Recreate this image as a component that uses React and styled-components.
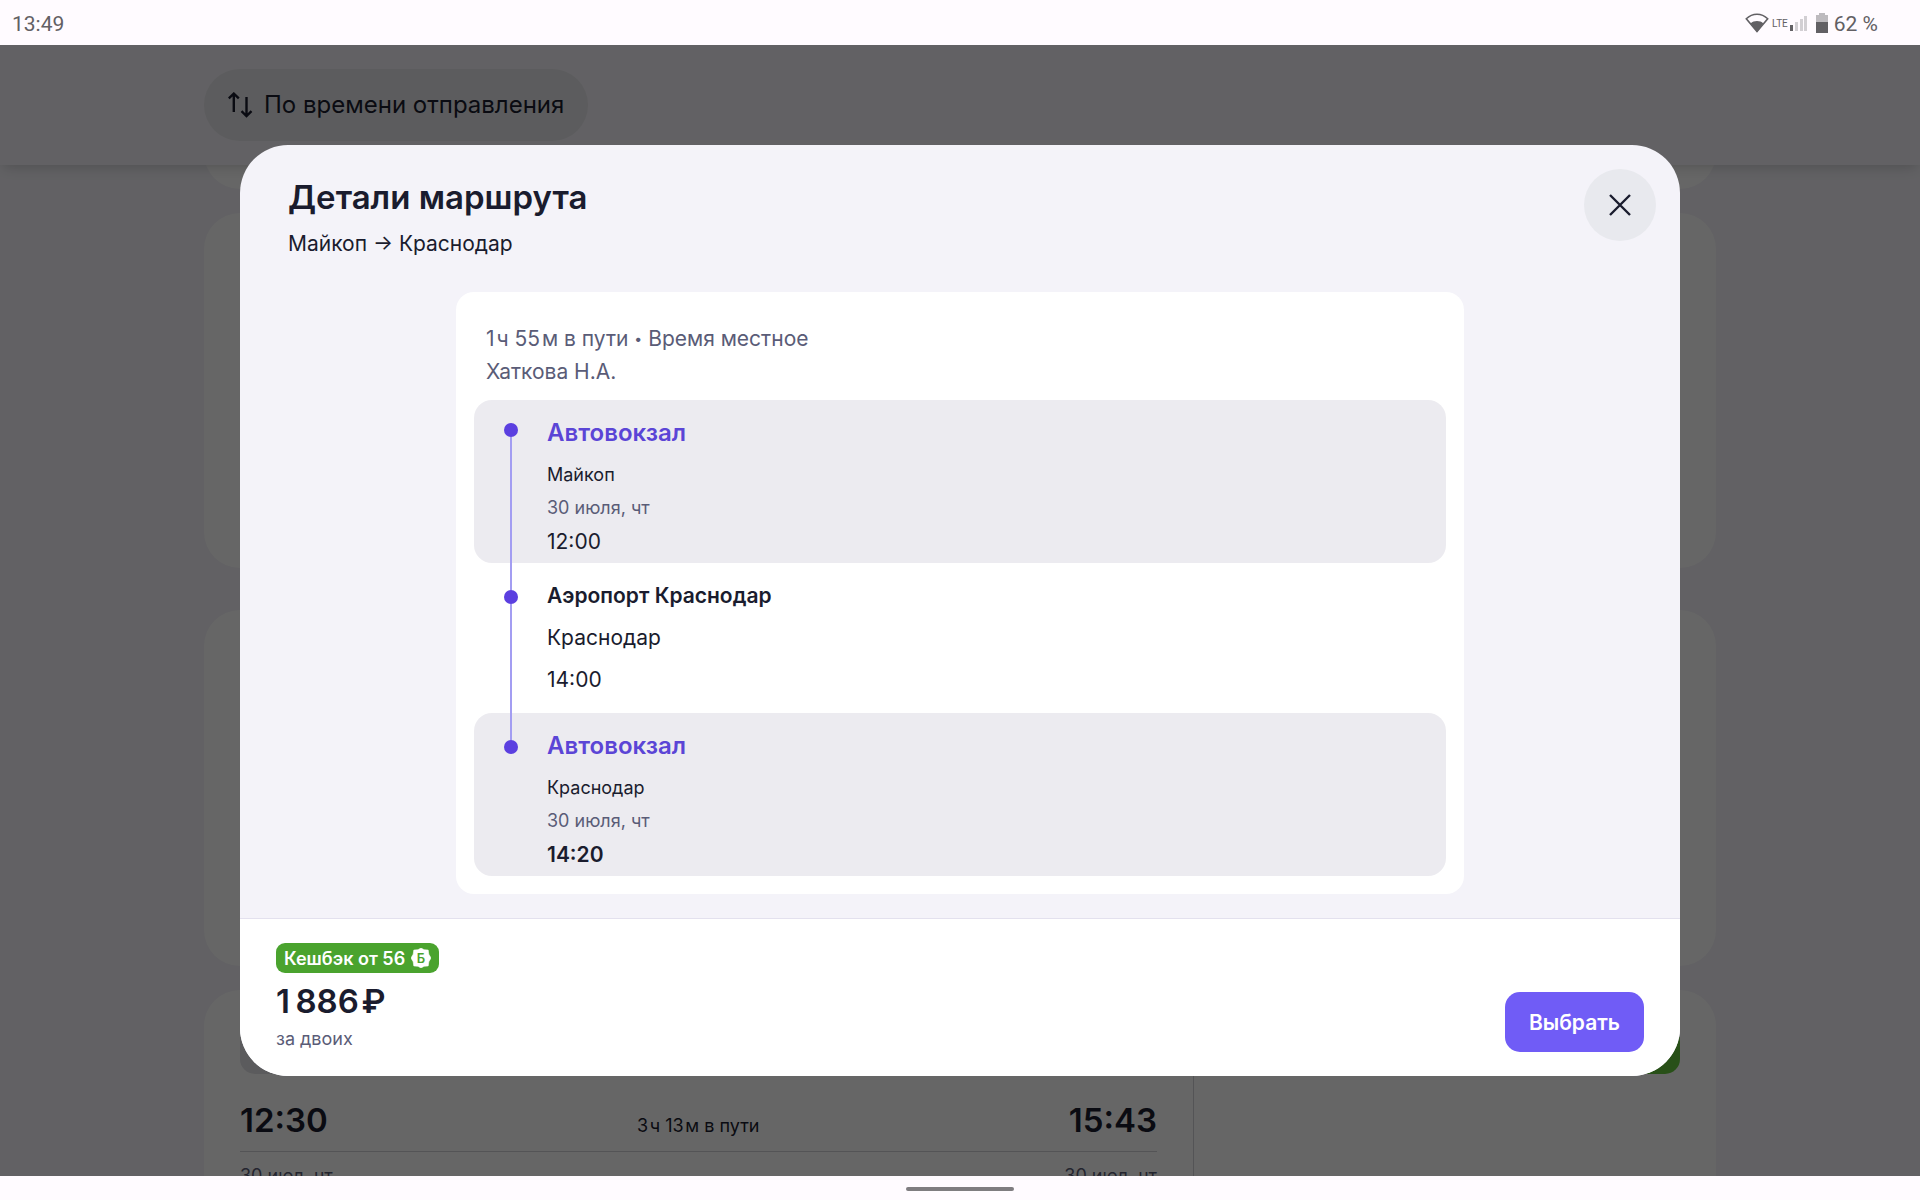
import React, { useState } from 'react';
import styled, { createGlobalStyle } from 'styled-components';

const GlobalStyle = createGlobalStyle`
    html,
    body,
    #root {
        height: 100%;
    }
    body {
        margin: 0;
        overflow: hidden;
        font-family: Inter, 'Liberation Sans', sans-serif;
        color: #1a1c2e;
        background: #f4f3f9;
    }
    * {
        box-sizing: border-box;
    }
    button {
        font-family: inherit;
        color: inherit;
        border: none;
        cursor: pointer;
    }
    h2,
    h3,
    p,
    ol {
        margin: 0;
        padding: 0;
    }
`;

const Screen = styled.div`
    display: flex;
    flex-direction: column;
    height: 100%;
`;

/* system bars */
const StatusBar = styled.div`
    flex: none;
    display: flex;
    align-items: center;
    justify-content: space-between;
    height: 45px;
    padding: 3px 42px 0 12px;
    font-family: Roboto, sans-serif;
    font-size: 21px;
    line-height: 24px;
    color: #626064;
    background: #fffbff;
`;
const StatusIcons = styled.div`
    display: flex;
    align-items: center;
    gap: 6px;

    & svg {
        display: block;
        margin-bottom: 3px;
    }
`;
const Network = styled.span`
    display: flex;
    align-items: center;
    gap: 2px;
    margin: 0 3px 0 -3px;
    font-size: 10px;
    line-height: 20px;
`;
const NavBar = styled.div`
    flex: none;
    display: flex;
    justify-content: center;
    align-items: center;
    height: 24px;
    padding-top: 2px;
    background: #fffbff;
`;
const NavHandle = styled.div`
    width: 108px;
    height: 4px;
    border-radius: 2px;
    background: #7f7d80;
`;

/* list of trips under the dialog */
const Stage = styled.main`
    flex: 1;
    position: relative;
    overflow: hidden;
    min-height: 0;
`;
const SortBar = styled.header`
    position: relative;
    z-index: 1;
    padding: 24px 204px;
    background: #f4f3f9;
    box-shadow: 0 6px 12px -4px rgba(0, 0, 0, 0.18);
`;
const SortButton = styled.button`
    display: flex;
    align-items: center;
    gap: 10px;
    height: 72px;
    padding: 0 24px;
    border-radius: 36px;
    font-size: 24px;
    line-height: 36px;
    background: #e6e6ea;
`;
const TripList = styled.div`
    display: flex;
    flex-direction: column;
    gap: 24px;
    margin-top: -60px;
    padding: 0 204px;
`;
const TripCard = styled.article`
    flex: none;
    min-height: ${(props) => props.$height}px;
    margin-bottom: ${(props) => (props.$last ? 18 : 0)}px;
    padding: 36px;
    border-radius: 36px;
    background: #fff;
`;
const TripTags = styled.div`
    display: flex;
    justify-content: space-between;
`;
const TripTag = styled.span`
    width: 120px;
    height: 48px;
    border-radius: 15px;
    background: ${(props) => props.$color};
`;
const TripBody = styled.div`
    display: grid;
    grid-template-columns: 1fr 487px;
    gap: 36px;
`;
const TripTimes = styled.div`
    padding-top: 24px;
`;
const TimesRow = styled.div`
    display: flex;
    justify-content: space-between;
    align-items: baseline;
    padding-bottom: 9px;
    border-bottom: 1px solid #d3d3d8;
    font-size: 18px;
    line-height: 24px;

    & time {
        font-size: 33px;
        line-height: 44px;
        font-weight: 600;
    }
`;
const DatesRow = styled.div`
    display: flex;
    justify-content: space-between;
    padding-top: 10px;
    font-size: 18px;
    line-height: 27px;
    color: #5a5c77;
`;
const TripPrice = styled.div`
    min-height: 160px;
    border-left: 1px solid #d3d3d8;
`;

/* dialog */
const Overlay = styled.div`
    position: absolute;
    inset: 0;
    z-index: 2;
    display: flex;
    justify-content: center;
    align-items: center;
    background: rgba(0, 0, 0, 0.6);
`;
const Dialog = styled.section`
    width: 75%;
    overflow: hidden;
    border-radius: 48px;
    background: #f4f3f9;
`;
const DialogHead = styled.div`
    display: flex;
    justify-content: space-between;
    align-items: flex-start;
    padding: 24px 24px 0 48px;
`;
const DialogTitles = styled.div`
    padding-top: 4px;

    & h2 {
        margin-bottom: 6px;
        font-size: 33px;
        line-height: 48px;
        font-weight: 600;
    }
    & p {
        font-size: 21px;
        line-height: 33px;
    }
`;
const CloseButton = styled.button`
    display: flex;
    justify-content: center;
    align-items: center;
    width: 72px;
    height: 72px;
    padding: 0;
    border-radius: 50%;
    background: #e8e9ee;
`;
const DialogBody = styled.div`
    padding: 32px 0 24px;
`;
const Route = styled.div`
    width: 70%;
    margin: 0 auto;
    padding: 18px;
    border-radius: 18px;
    background: #fff;
`;
const Summary = styled.p`
    padding: 12px;
    font-size: 21px;
    line-height: 33px;
    color: #5a5c77;
`;
const Bullet = styled.span`
    font-size: 14px;
    line-height: 14px;
    vertical-align: 2px;
`;
const Stops = styled.ol`
    list-style: none;
`;
const Stop = styled.li`
    display: flex;
    gap: 29px;
    padding-left: 30px;
    border-radius: 18px;
    background: ${(props) => (props.$station ? '#ecebf0' : 'transparent')};
`;
const Track = styled.div`
    flex: none;
    display: flex;
    flex-direction: column;
    align-items: center;
    width: 14px;
`;
const Line = styled.span`
    width: 2px;
    flex: ${(props) => (props.$height ? 'none' : '1')};
    height: ${(props) => (props.$height ? `${props.$height}px` : 'auto')};
    background: ${(props) => (props.$hidden ? 'transparent' : '#a39df2')};
`;
const Dot = styled.span`
    flex: none;
    width: 14px;
    height: 14px;
    border-radius: 50%;
    background: #5b3fe0;
`;
const StopInfo = styled.div`
    padding: ${(props) => (props.$station ? '15px 0 3px' : '12px 0')};
    font-size: ${(props) => (props.$station ? 18 : 21)}px;
    line-height: ${(props) => (props.$station ? 33 : 42)}px;

    & h3 {
        margin-bottom: ${(props) => (props.$station ? 7 : 0)}px;
        font-size: ${(props) => (props.$station ? 24 : 21)}px;
        line-height: ${(props) => (props.$station ? 36 : 42)}px;
        font-weight: 600;
        color: ${(props) => (props.$station ? '#5b45d6' : 'inherit')};
    }
`;
const StopDate = styled.p`
    color: #5a5c77;
`;
const StopTime = styled.time`
    display: block;
    font-size: 21px;
    line-height: ${(props) => (props.$station ? 36 : 42)}px;
    font-weight: ${(props) => (props.$bold ? 600 : 400)};
`;
const DialogFoot = styled.div`
    display: flex;
    justify-content: space-between;
    align-items: flex-end;
    padding: 24px 36px;
    border-top: 1px solid #e3e1ee;
    background: #fff;
`;
const Cashback = styled.div`
    display: flex;
    align-items: center;
    gap: 6px;
    width: fit-content;
    height: 30px;
    margin-bottom: 4px;
    padding: 0 8px;
    border-radius: 9px;
    font-size: 18px;
    font-weight: 600;
    color: #fff;
    background: #4aa32e;
`;
const Price = styled.p`
    font-size: 33px;
    line-height: 48px;
    font-weight: 600;
`;
const PriceNote = styled.p`
    font-size: 18px;
    line-height: 27px;
    color: #5a5c77;
`;
const SelectButton = styled.button`
    height: 60px;
    padding: 0 24px;
    border-radius: 15px;
    font-size: 21px;
    font-weight: 600;
    background: #705cf6;

    && {
        color: #fff;
    }
`;

const stops = [
    { id: 1, name: 'Автовокзал', city: 'Майкоп', date: '30 июля, чт', time: '12:00' },
    { id: 2, name: 'Аэропорт Краснодар', city: 'Краснодар', time: '14:00' },
    { id: 3, name: 'Автовокзал', city: 'Краснодар', date: '30 июля, чт', time: '14:20' },
];

function WifiIcon() {
    return (
        <svg width="24" height="20" viewBox="0 0 24 20" fill="none">
            <path d="M1.3 5.8C7.5 -.2 16.5 -.2 22.7 5.8L12 18.4z" stroke="#626064" strokeWidth="1.6" />
            <path d="M5.6 10.4C9 7.2 15 7.2 18.4 10.4L12 19z" fill="#626064" />
        </svg>
    );
}

function SignalIcon() {
    return (
        <svg width="17" height="16" viewBox="0 0 17 16">
            <path d="M0 10h3v6H0z" fill="#626064" />
            <path d="M5 7h3v9H5zM10 4h3v12h-3zM14 1h3v15h-3z" fill="#d2cfd3" />
        </svg>
    );
}

function BatteryIcon() {
    return (
        <svg width="12" height="20" viewBox="0 0 12 20">
            <path d="M3 0h6v2h3v7H0V2h3z" fill="#bdbabe" />
            <path d="M0 9h12v11H0z" fill="#626064" />
        </svg>
    );
}

function SortIcon() {
    return (
        <svg width="26" height="26" viewBox="0 0 26 26" fill="none" stroke="currentColor" strokeWidth="2.4">
            <path d="M5.8 20V1.5M.8 6.4l5-4.8 5 4.8" />
            <path d="M18.5 5v19M13.5 19.2l5 4.8 5-4.8" />
        </svg>
    );
}

function BonusIcon() {
    return (
        <svg width="20" height="20" viewBox="0 0 20 20">
            <path
                d="M10 0l3 1.7 4.2.4.6 4.1L20 10l-2.2 3.8-.6 4.1-4.2.4L10 20l-3-1.7-4.2-.4-.6-4.1L0 10l2.2-3.8.6-4.1L7 1.7z"
                fill="#fff"
                stroke="#fff"
                strokeWidth="0.6"
                strokeLinejoin="round"
            />
            <text x="10" y="15" textAnchor="middle" fontSize="13" fontWeight="600" fill="#4aa32e">
                Б
            </text>
        </svg>
    );
}

function RouteStop({ stop, first, last }) {
    const station = Boolean(stop.date);
    return (
        <Stop $station={station}>
            <Track>
                <Line $height={first ? 23 : 27} $hidden={first} />
                <Dot />
                <Line $hidden={last} />
            </Track>
            <StopInfo $station={station}>
                <h3>{stop.name}</h3>
                <p>{stop.city}</p>
                {stop.date && <StopDate>{stop.date}</StopDate>}
                <StopTime $station={station} $bold={last}>
                    {stop.time}
                </StopTime>
            </StopInfo>
        </Stop>
    );
}

function RouteDialog({ onClose }) {
    return (
        <Overlay>
            <Dialog role="dialog" aria-labelledby="route-title">
                <DialogHead>
                    <DialogTitles>
                        <h2 id="route-title">Детали маршрута</h2>
                        <p>Майкоп → Краснодар</p>
                    </DialogTitles>
                    <CloseButton type="button" aria-label="Закрыть" onClick={onClose}>
                        <svg width="22" height="22" viewBox="0 0 22 22" stroke="currentColor" strokeWidth="2.4">
                            <path d="M1 1l20 20M21 1L1 21" />
                        </svg>
                    </CloseButton>
                </DialogHead>
                <DialogBody>
                    <Route>
                        <Summary>
                            1&#8202;ч 55&#8202;м в пути <Bullet>•</Bullet> Время местное
                            <br />
                            Хаткова Н.А.
                        </Summary>
                        <Stops>
                            {stops.map((stop, i) => (
                                <RouteStop key={stop.id} stop={stop} first={i === 0} last={i === stops.length - 1} />
                            ))}
                        </Stops>
                    </Route>
                </DialogBody>
                <DialogFoot>
                    <div>
                        <Cashback>
                            Кешбэк от 56
                            <BonusIcon />
                        </Cashback>
                        <Price>1&#8201;886&#8202;₽</Price>
                        <PriceNote>за двоих</PriceNote>
                    </div>
                    <SelectButton type="button">Выбрать</SelectButton>
                </DialogFoot>
            </Dialog>
        </Overlay>
    );
}

function App() {
    const [open, setOpen] = useState(true);

    return (
        <Screen>
            <GlobalStyle />
            <StatusBar>
                <span>13:49</span>
                <StatusIcons>
                    <WifiIcon />
                    <Network>
                        LTE
                        <SignalIcon />
                    </Network>
                    <BatteryIcon />
                    <span>62 %</span>
                </StatusIcons>
            </StatusBar>
            <Stage>
                <SortBar>
                    <SortButton type="button" onClick={() => setOpen(true)}>
                        <SortIcon />
                        По времени отправления
                    </SortButton>
                </SortBar>
                <TripList>
                    <TripCard $height={84} />
                    <TripCard $height={355} $last />
                    <TripCard $height={356} />
                    <TripCard $height={360}>
                        <TripTags>
                            <TripTag $color="#e3e3e8" />
                            <TripTag $color="#65c83c" />
                        </TripTags>
                        <TripBody>
                            <TripTimes>
                                <TimesRow>
                                    <time>12:30</time>
                                    <span>3&#8202;ч 13&#8202;м в пути</span>
                                    <time>15:43</time>
                                </TimesRow>
                                <DatesRow>
                                    <span>30 июл, чт</span>
                                    <span>30 июл, чт</span>
                                </DatesRow>
                            </TripTimes>
                            <TripPrice />
                        </TripBody>
                    </TripCard>
                </TripList>
                {open && <RouteDialog onClose={() => setOpen(false)} />}
            </Stage>
            <NavBar>
                <NavHandle />
            </NavBar>
        </Screen>
    );
}

export default App;
